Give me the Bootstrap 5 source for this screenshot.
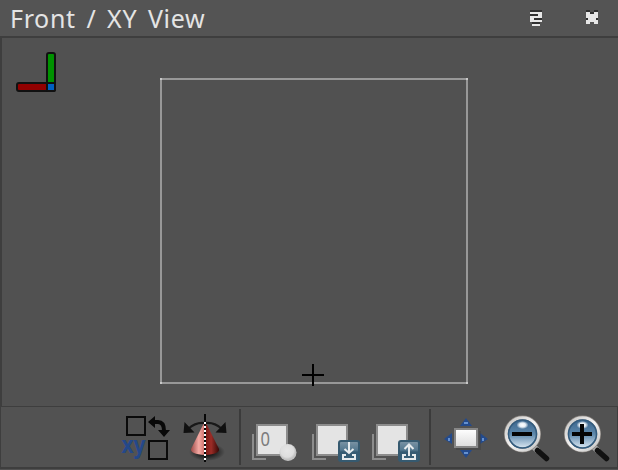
<!DOCTYPE html>
<html lang="en">
<head>
<meta charset="utf-8">
<meta name="viewport" content="width=device-width, initial-scale=1">
<title>Front / XY View</title>
<link href="https://cdn.jsdelivr.net/npm/bootstrap@5.3.0/dist/css/bootstrap.min.css" rel="stylesheet">
<style>
body{background:#525252;font-family:"Noto Sans","Open Sans",sans-serif}
svg{display:block;flex:none}
.panel{height:470px}
.titlebar{height:38px;border-bottom:2px solid #3e3e3e;background:#545454;padding:0 20px 0 10px}
.titlebar h1{font-size:25px;line-height:36px;color:#e4e4e4;letter-spacing:.65px;word-spacing:3.6px;font-weight:400}
.window-tools{gap:44px}
.viewport{height:368px;border-left:2px solid #3e3e3e;background:#515151}
.tools{height:63px;border:1px solid #3e3e3e;border-bottom:2px solid #3e3e3e;background:#525252;padding-right:1px}
.divider{width:2px;height:56px;background:#3b3b3b}
.d1{margin:0 4px 0 3px}
.d2{margin:0 5px 0 4px}
</style>
<script src="https://cdn.jsdelivr.net/npm/bootstrap@5.3.0/dist/js/bootstrap.bundle.min.js"></script>
</head>
<body class="overflow-hidden">
<div class="panel d-flex flex-column">
<header class="titlebar d-flex align-items-center justify-content-between">
<h1 class="m-0 text-nowrap">Front / XY View</h1>
<div class="window-tools d-flex">
<button class="btn p-0 border-0 rounded-0" aria-label="Float"><svg width="12" height="16" viewBox="0 0 12 16" shape-rendering="crispEdges"><path fill="#303030" d="M0 0h12v2H0z"/><path fill="#e6e6e6" d="M0 2h12v10H0zM2 14h8v2H2z"/><path fill="#303030" d="M0 4h8v2H0zM4 8h8v2H4zM2 12h8v2H2z"/></svg></button>
<button class="btn p-0 border-0 rounded-0" aria-label="Close"><svg width="12" height="16" viewBox="0 0 12 16" shape-rendering="crispEdges"><path fill="#303030" d="M0 0h4v2h4V0h4v2H8v2H4V2H0zM0 8h2v2H0zM10 8h2v2h-2z"/><path fill="#e6e6e6" d="M0 2h4v2h4V2h4v6h-2v2h2v4H8v-2H4v2H0v-4h2V8H0z"/></svg></button>
</div>
</header>
<main class="viewport">
<svg width="616" height="368" viewBox="2 38 616 368">
<g stroke="#111" stroke-width="2"><rect x="17" y="83" width="34" height="8" rx="2" fill="#920000"/><rect x="47" y="53" width="8" height="38" rx="2" fill="#009200"/><rect x="47" y="83" width="8" height="8" rx="1" fill="#0060c0"/></g>
<rect x="161" y="79" width="306" height="304" fill="none" stroke="#989898" stroke-width="2"/>
<path fill="#c8c8c8" d="M160 78h2v2h-2zM466 78h2v2h-2zM160 382h2v2h-2zM466 382h2v2h-2z"/>
<path d="M302 375h22M313 364v22" stroke="#000" stroke-width="2"/>
</svg>
</main>
<footer class="tools d-flex justify-content-end align-items-center">
<svg width="60" height="60" viewBox="116 407 60 60">
<g fill="none" stroke="#0a0a0a" stroke-width="2"><path d="M127 417h18v18h-18zM149 441h18v18h-18z"/></g>
<text x="121.500" y="453" font-family="Noto Sans" font-weight="700" font-size="23" fill="#24488a" textLength="24" lengthAdjust="spacingAndGlyphs">xy</text>
<path d="M154 422h4q6 0 6 9" fill="none" stroke="#080808" stroke-width="4"/><path fill="#080808" d="M148 422l7-6v12zM158 430h12l-6 7z"/>
</svg>
<svg width="60" height="60" viewBox="176 407 60 60">
<defs><linearGradient id="cone"><stop offset="0" stop-color="#9c4a47"/><stop offset=".28" stop-color="#f4aaa4"/><stop offset=".5" stop-color="#cc6a65"/><stop offset=".52" stop-color="#7e1c18"/><stop offset=".72" stop-color="#9b2c26"/><stop offset="1" stop-color="#350806"/></linearGradient><radialGradient id="shade"><stop offset=".4" stop-opacity=".65"/><stop offset="1" stop-opacity="0"/></radialGradient></defs>
<ellipse cx="207" cy="452" rx="18" ry="9" fill="url(#shade)"/>
<path d="M205 421L219 449q1 5-14 6q-15-1-14-6z" fill="url(#cone)"/>
<path d="M188 429q8-7 16-6M222 429q-8-7-16-6" fill="none" stroke="#181818" stroke-width="2"/>
<path fill="#101010" d="M184.500 422l-1 11 11-.5zM225.500 422l1 11-11-.5z"/>
<path d="M205 414v48" stroke="#080808" stroke-width="2"/><path d="M205 422v38" stroke="#fff" stroke-width="2" stroke-dasharray="2 2"/>
</svg>
<i class="divider d1"></i>
<svg width="60" height="60" viewBox="245 407 60 60">
<defs><radialGradient id="ball" cx=".45" cy=".4"><stop offset="0" stop-color="#e6e6e6"/><stop offset=".75" stop-color="#dedede"/><stop offset="1" stop-color="#c2c2c2"/></radialGradient></defs>
<path d="M253 434v25h13" fill="none" stroke="#8c8c8c" stroke-width="2"/><rect x="257" y="425" width="30" height="30" fill="#e4e4e4" stroke="#8c8c8c" stroke-width="2"/>
<text x="260.500" y="446" font-family="Noto Sans" font-size="19" fill="#7c7c7c" textLength="9.500" lengthAdjust="spacingAndGlyphs">0</text>
<circle cx="288" cy="452.500" r="8.500" fill="url(#ball)"/>
</svg>
<svg width="60" height="60" viewBox="305 407 60 60">
<defs><linearGradient id="badgeFill" x2="0" y2="1"><stop offset="0" stop-color="#7d95a5"/><stop offset=".45" stop-color="#54788f"/><stop offset=".55" stop-color="#345a72"/><stop offset="1" stop-color="#38617a"/></linearGradient></defs>
<path d="M313 434v25h13" fill="none" stroke="#8c8c8c" stroke-width="2"/><rect x="317" y="425" width="30" height="30" fill="#e4e4e4" stroke="#8c8c8c" stroke-width="2"/>
<rect x="339" y="441" width="20" height="20" rx="2" fill="url(#badgeFill)" stroke="#365a70" stroke-width="2"/>
<path d="M349 442v11M344.500 449l4.500 4 4.500-4M346 455h-3v4h12v-4h-3" fill="none" stroke="#e6ebed" stroke-width="2"/>
</svg>
<svg width="60" height="60" viewBox="365 407 60 60">
<path d="M373 434v25h13" fill="none" stroke="#8c8c8c" stroke-width="2"/><rect x="377" y="425" width="30" height="30" fill="#e4e4e4" stroke="#8c8c8c" stroke-width="2"/>
<rect x="399" y="441" width="20" height="20" rx="2" fill="url(#badgeFill)" stroke="#365a70" stroke-width="2"/>
<path d="M409 456v-11M404.500 449l4.500-4.500 4.500 4.500M406 455h-3v4h12v-4h-3" fill="none" stroke="#e6ebed" stroke-width="2"/>
</svg>
<i class="divider d2"></i>
<svg width="60" height="60" viewBox="436 407 60 60">
<defs><linearGradient id="page" x2="0" y2="1"><stop offset="0" stop-color="#fff"/><stop offset="1" stop-color="#dcdcdc"/></linearGradient></defs>
<path fill="#234a8c" d="M466 418l6 8h-12zM466 458l6-8h-12zM444 439l8-6v11zM488 439l-8-6v11z"/>
<path fill="#6490cf" d="M464 422h4v2h-4zM464 452h4v2h-4zM448 438h2v3h-2zM482 438h2v3h-2z"/>
<path d="M456 449h24v-18" fill="none" stroke="#3f3f3f" stroke-width="2" opacity=".5"/>
<rect x="455" y="429" width="22" height="18" fill="url(#page)" stroke="#878787" stroke-width="2"/>
</svg>
<svg width="60" height="60" viewBox="496 407 60 60">
<defs><linearGradient id="lens" x2="0" y2="1"><stop offset="0" stop-color="#35618a"/><stop offset=".5" stop-color="#5d88ab"/><stop offset=".75" stop-color="#a5bfd5"/><stop offset="1" stop-color="#edf5fb"/></linearGradient><linearGradient id="rim" x2="1" y2="1"><stop offset="0" stop-color="#c4c2c0"/><stop offset=".5" stop-color="#f4f4f4"/><stop offset="1" stop-color="#c4c4c4"/></linearGradient><radialGradient id="glint"><stop offset="0" stop-color="#fff"/><stop offset=".5" stop-color="#e8f0f6"/><stop offset="1" stop-color="#fff" stop-opacity="0"/></radialGradient>
<g id="glass"><path d="M533 446l5 5" stroke="#aaa" stroke-width="6"/><path d="M537.500 450.500l9 8" stroke="#111" stroke-width="5.500" stroke-linecap="round"/><circle cx="522.500" cy="434" r="16" fill="url(#lens)" stroke="#8a8580" stroke-width="5"/><circle cx="522.500" cy="434" r="16.300" fill="none" stroke="url(#rim)" stroke-width="3"/><circle cx="522.500" cy="434" r="14" fill="none" stroke="#315c80" stroke-width="1.500"/><ellipse cx="522.500" cy="425" rx="6" ry="4" fill="url(#glint)"/></g></defs>
<use href="#glass"/><path fill="#050505" d="M512 432h20v4h-20z"/>
</svg>
<svg width="60" height="60" viewBox="556 407 60 60">
<use href="#glass" x="60"/><path fill="#050505" d="M572 432h8v-8h4v8h8v4h-8v8h-4v-8h-8z"/>
</svg>
</footer>
</div>
</body>
</html>
